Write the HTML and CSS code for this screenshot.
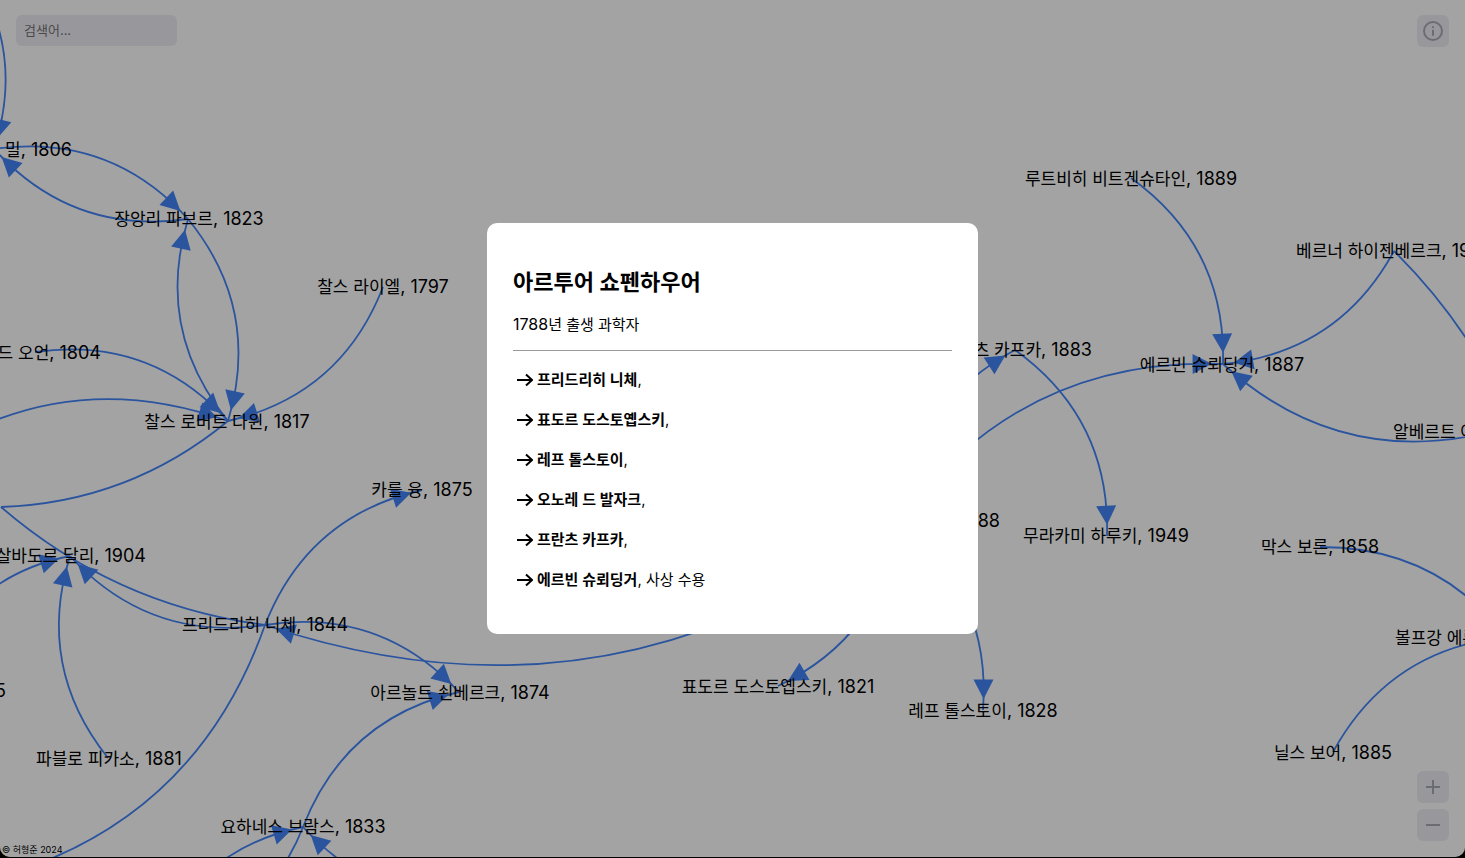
FILE: index.html
```html
<!DOCTYPE html>
<html lang="ko">
<head>
<meta charset="utf-8">
<title>인물 관계도</title>
<link rel="stylesheet" href="styles.css">
</head>
<body>
<div class="app">
  <svg class="graph" role="img" aria-label="인물 관계도">
    <g id="edges" class="edges"></g>
    <g class="labels">
      <text class="end" x="72" y="156">존 스튜어트 밀<tspan class="year">, 1806</tspan></text>
      <text x="189" y="225">장앙리 파브르<tspan class="year">, 1823</tspan></text>
      <text x="383" y="293">찰스 라이엘<tspan class="year">, 1797</tspan></text>
      <text class="end" x="101" y="359">리처드 오언<tspan class="year">, 1804</tspan></text>
      <text x="227" y="428">찰스 로버트 다윈<tspan class="year">, 1817</tspan></text>
      <text x="422" y="496">카를 융<tspan class="year">, 1875</tspan></text>
      <text class="end" x="146" y="562">살바도르 달리<tspan class="year">, 1904</tspan></text>
      <text x="265" y="631">프리드리히 니체<tspan class="year">, 1844</tspan></text>
      <text class="end" x="6" y="697"><tspan class="year">5</tspan></text>
      <text x="460" y="699">아르놀트 쇤베르크<tspan class="year">, 1874</tspan></text>
      <text x="109" y="765">파블로 피카소<tspan class="year">, 1881</tspan></text>
      <text x="303" y="833">요하네스 브람스<tspan class="year">, 1833</tspan></text>
      <text x="778" y="693">표도르 도스토옙스키<tspan class="year">, 1821</tspan></text>
      <text x="983" y="717">레프 톨스토이<tspan class="year">, 1828</tspan></text>
      <text class="end" x="1000" y="527">아르투어 쇼펜하우어<tspan class="year">, 1788</tspan></text>
      <text class="end" x="1092" y="356">프란츠 카프카<tspan class="year">, 1883</tspan></text>
      <text x="1106" y="542">무라카미 하루키<tspan class="year">, 1949</tspan></text>
      <text x="1131" y="185">루트비히 비트겐슈타인<tspan class="year">, 1889</tspan></text>
      <text x="1222" y="371">에르빈 슈뢰딩거<tspan class="year">, 1887</tspan></text>
      <text class="start" x="1296" y="257">베르너 하이젠베르크<tspan class="year">, 1901</tspan></text>
      <text class="start" x="1393" y="438">알베르트 아인슈타인<tspan class="year">, 1879</tspan></text>
      <text x="1320" y="553">막스 보른<tspan class="year">, 1858</tspan></text>
      <text class="start" x="1395" y="644">볼프강 에른스트 파울리<tspan class="year">, 1900</tspan></text>
      <text x="1333" y="759">닐스 보어<tspan class="year">, 1885</tspan></text>
    </g>
  </svg>
  <header class="toolbar">
    <input class="search" type="search" placeholder="검색어..." aria-label="검색어">
    <button class="tool" type="button" aria-label="정보">
      <svg width="20" height="20" viewBox="0 0 20 20" fill="none" stroke="currentColor" stroke-width="2"><circle cx="10" cy="10" r="9"/><path d="M10 8.8v6M10 5.2v1.8"/></svg>
    </button>
  </header>
  <footer class="bottom">
    <small class="copyright">© 허형준 2024</small>
    <div class="zoom">
      <button class="tool" type="button" aria-label="확대">
        <svg width="16" height="16" viewBox="0 0 16 16" fill="none" stroke="currentColor" stroke-width="2"><path d="M1 8h14M8 1v14"/></svg>
      </button>
      <button class="tool" type="button" aria-label="축소">
        <svg width="16" height="16" viewBox="0 0 16 16" fill="none" stroke="currentColor" stroke-width="2"><path d="M1 8h14"/></svg>
      </button>
    </div>
  </footer>
  <div class="overlay">
    <section class="modal" role="dialog" aria-modal="true" aria-labelledby="person-name">
      <h2 class="name" id="person-name">아르투어 쇼펜하우어</h2>
      <p class="born"><span class="num">1788</span>년 출생 과학자</p>
      <hr class="rule">
      <ul class="links">
        <li><svg class="arrow" viewBox="0 0 16 14"><path d="M0 7h15M9 1.5 15 7 9 12.5"/></svg><span><b>프리드리히 니체</b>,</span></li>
        <li><svg class="arrow" viewBox="0 0 16 14"><path d="M0 7h15M9 1.5 15 7 9 12.5"/></svg><span><b>표도르 도스토옙스키</b>,</span></li>
        <li><svg class="arrow" viewBox="0 0 16 14"><path d="M0 7h15M9 1.5 15 7 9 12.5"/></svg><span><b>레프 톨스토이</b>,</span></li>
        <li><svg class="arrow" viewBox="0 0 16 14"><path d="M0 7h15M9 1.5 15 7 9 12.5"/></svg><span><b>오노레 드 발자크</b>,</span></li>
        <li><svg class="arrow" viewBox="0 0 16 14"><path d="M0 7h15M9 1.5 15 7 9 12.5"/></svg><span><b>프란츠 카프카</b>,</span></li>
        <li><svg class="arrow" viewBox="0 0 16 14"><path d="M0 7h15M9 1.5 15 7 9 12.5"/></svg><span><b>에르빈 슈뢰딩거</b>, 사상 수용</span></li>
      </ul>
    </section>
  </div>
</div>
<script src="graph.js"></script>
</body>
</html>
```

FILE: styles.css
```css
* {
  box-sizing: border-box;
}

body {
  margin: 0;
  background: #000;
  color: #000;
  font-family: Inter, "Noto Sans CJK KR", sans-serif;
  font-size: 15px;
  line-height: 20px;
}

.app {
  position: relative;
  display: flex;
  flex-direction: column;
  justify-content: space-between;
  height: calc(100vh - 1px);
  overflow: hidden;
  border-radius: 0 0 10px 10px;
  background: #fff;
}

.graph {
  position: absolute;
  inset: 0;
  width: 100%;
  height: 100%;
}

.edges path {
  fill: none;
  stroke: #4484f8;
  stroke-width: 1.8;
}

.edges polygon {
  fill: #4484f8;
}

.labels {
  font-size: 17px;
  text-anchor: middle;
}

.labels .year {
  font-size: 18px;
}

.labels .start {
  text-anchor: start;
}

.labels .end {
  text-anchor: end;
}

.toolbar {
  position: relative;
  display: flex;
  justify-content: space-between;
  align-items: flex-start;
  padding: 15px 16px;
}

.search {
  width: 161px;
  height: 31px;
  padding: 0 8px 2px;
  border: 0;
  border-radius: 6px;
  background: #eeedf4;
  font: inherit;
  font-size: 13px;
}

.search::placeholder {
  color: #757575;
}

.tool {
  display: flex;
  align-items: center;
  justify-content: center;
  width: 32px;
  height: 32px;
  padding: 0;
  border: 0;
  border-radius: 6px;
  background: #eeedf4;
  color: #aaaab8;
}

.bottom {
  position: relative;
  display: flex;
  justify-content: space-between;
  align-items: flex-end;
  padding-left: 2px;
}

.copyright {
  font-size: 9px;
  line-height: 14px;
}

.zoom {
  display: flex;
  flex-direction: column;
  gap: 6px;
  padding: 0 16px 16px 0;
}

.overlay {
  position: absolute;
  inset: 0;
  display: flex;
  align-items: center;
  justify-content: center;
  background: rgba(0, 0, 0, 0.36);
}

.modal {
  width: 491px;
  max-width: 90%;
  padding: 43px 26px 44px;
  border-radius: 10px;
  background: #fff;
}

.name {
  margin: 0 0 16px;
  font-size: 22px;
  font-weight: 600;
  line-height: 32px;
}

.born {
  margin: 0;
}

.num {
  font-size: 16px;
}

.rule {
  margin: 15px 0 19px;
  border: 0;
  border-top: 1px solid #999;
}

.links {
  display: flex;
  flex-direction: column;
  gap: 20px;
  margin: 0;
  padding: 0 0 0 4px;
  list-style: none;
}

.links li {
  display: flex;
  align-items: center;
  gap: 4px;
}

.links b {
  font-weight: 600;
}

.arrow {
  width: 16px;
  height: 14px;
  fill: none;
  stroke: #000;
  stroke-width: 2;
}
```

FILE: graph.js
```js
const nodes = {
  mill: [-6, 149], favre: [188, 219], lyell: [383, 287], owen: [35, 352],
  darwin: [228, 421], jung: [422, 490], dali: [70, 556], nietzsche: [265, 625],
  schoenberg: [459, 692], picasso: [108, 758], brahms: [303, 827],
  dostoevsky: [778, 686], tolstoy: [983, 710], schopenhauer: [900, 521],
  kafka: [1015, 350], murakami: [1107, 536], wittgenstein: [1131, 178],
  schrodinger: [1223, 364], heisenberg: [1394, 251], einstein: [1490, 432],
  born: [1320, 547], pauli: [1508, 637], bohr: [1333, 752],
  hume: [-40, -46], lamarck: [-90, 468], west: [1, 507], freud: [-70, 670],
  wagner: [-12, 880], bach: [154, 950], mahler: [176, 937], liszt: [498, 896],
  dirac: [1530, 470], planck: [1515, 650]
};

// [source, target, curvature, arrowhead]
const edges = [
  ["hume", "mill"], ["mill", "favre"], ["favre", "mill"],
  ["favre", "darwin"], ["darwin", "favre"], ["owen", "darwin"],
  ["lamarck", "darwin"], ["lyell", "darwin"],
  ["darwin", "west", 0.17, false], ["nietzsche", "west", 0.15, false],
  ["nietzsche", "dali"], ["freud", "dali"], ["picasso", "dali"],
  ["nietzsche", "jung"], ["nietzsche", "schoenberg"],
  ["nietzsche", "wagner"], ["schopenhauer", "nietzsche"],
  ["brahms", "schoenberg"], ["bach", "brahms"], ["brahms", "mahler"],
  ["liszt", "brahms"], ["schopenhauer", "dostoevsky"],
  ["schopenhauer", "tolstoy"], ["schopenhauer", "kafka"],
  ["kafka", "murakami"], ["schopenhauer", "schrodinger"],
  ["wittgenstein", "schrodinger"], ["heisenberg", "schrodinger"],
  ["einstein", "schrodinger"], ["heisenberg", "dirac", 0.12],
  ["born", "planck"], ["bohr", "pauli"]
];

const NS = "http://www.w3.org/2000/svg";
const layer = document.getElementById("edges");

function add(tag, attribute, value) {
  const el = document.createElementNS(NS, tag);
  el.setAttribute(attribute, value);
  layer.appendChild(el);
}

for (const [from, to, curve = 0.265, head = true] of edges) {
  const [x0, y0] = nodes[from];
  const [x2, y2] = nodes[to];
  const cx = (x0 + x2) / 2 + (y2 - y0) * curve;
  const cy = (y0 + y2) / 2 - (x2 - x0) * curve;
  add("path", "d", `M${x0} ${y0}Q${cx} ${cy} ${x2} ${y2}`);
  if (!head) continue;

  // Walk back along the curve until the given distance from the target.
  const pointAt = (distance) => {
    for (let t = 1; t > 0; t -= 0.002) {
      const u = 1 - t;
      const x = u * u * x0 + 2 * u * t * cx + t * t * x2;
      const y = u * u * y0 + 2 * u * t * cy + t * t * y2;
      if (Math.hypot(x - x2, y - y2) >= distance) return [x, y];
    }
    return [x0, y0];
  };
  const [tx, ty] = pointAt(11);
  const [bx, by] = pointAt(30);
  const length = Math.hypot(tx - bx, ty - by);
  const nx = -(ty - by) / length * 10;
  const ny = (tx - bx) / length * 10;
  add("polygon", "points", `${tx},${ty} ${bx + nx},${by + ny} ${bx - nx},${by - ny}`);
}
```
